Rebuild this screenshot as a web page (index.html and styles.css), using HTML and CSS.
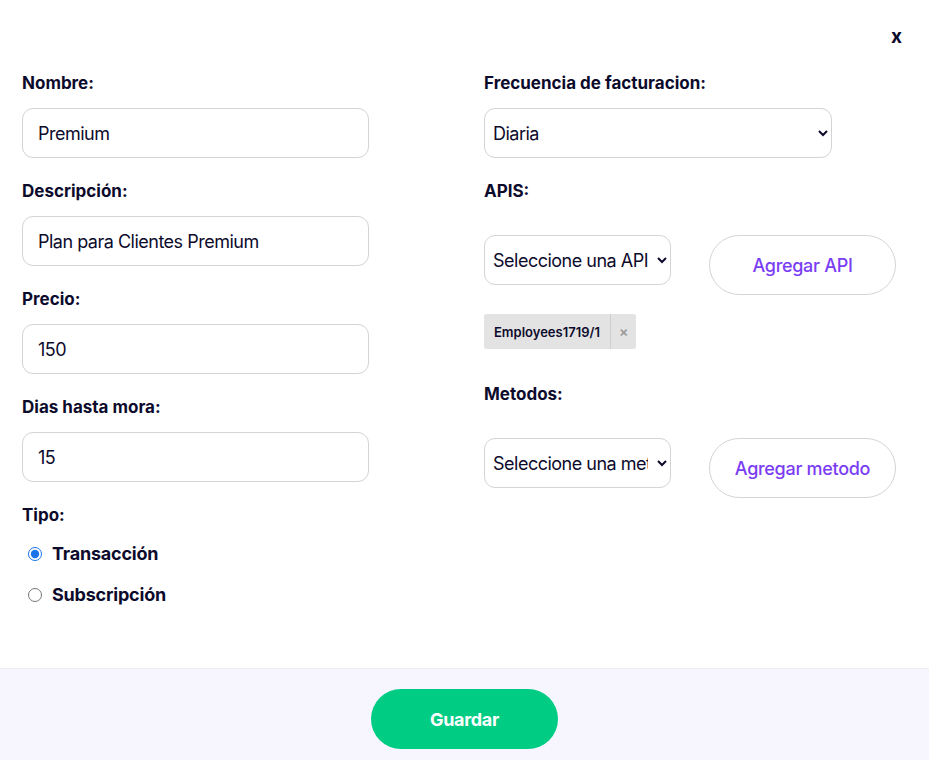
FILE: index.html
```html
<!DOCTYPE html>
<html lang="es">
<head>
    <meta charset="UTF-8">
    <title>Plan</title>
    <link rel="stylesheet" href="styles.css">
</head>
<body>

<div class="modal">
    <div class="modal-head">
        <span class="close">x</span>
    </div>

    <div class="modal-body">
        <!-- columna izquierda -->
        <div class="col">
            <div class="field">
                <label class="lbl">Nombre:</label>
                <input class="inp" type="text" value="Premium">
            </div>
            <div class="field">
                <label class="lbl">Descripción:</label>
                <input class="inp" type="text" value="Plan para Clientes Premium">
            </div>
            <div class="field">
                <label class="lbl">Precio:</label>
                <input class="inp" type="text" value="150">
            </div>
            <div class="field">
                <label class="lbl">Dias hasta mora:</label>
                <input class="inp" type="text" value="15">
            </div>
            <div class="field">
                <label class="lbl">Tipo:</label>
                <div class="radios">
                    <label class="radio"><input type="radio" name="tipo" checked> Transacción</label>
                    <label class="radio"><input type="radio" name="tipo"> Subscripción</label>
                </div>
            </div>
        </div>

        <!-- columna derecha -->
        <div class="col">
            <div class="field">
                <label class="lbl">Frecuencia de facturacion:</label>
                <select class="sel sel-wide">
                    <option>Diaria</option>
                </select>
            </div>
            <div class="field">
                <label class="lbl">APIS:</label>
                <div class="add-row">
                    <select class="sel sel-small">
                        <option>Seleccione una API</option>
                    </select>
                    <button class="btn-add">Agregar API</button>
                </div>
                <div class="chips">
                    <span class="chip">
                        <span class="chip-text">Employees1719/1</span>
                        <span class="chip-x">×</span>
                    </span>
                </div>
            </div>
            <div class="field">
                <label class="lbl">Metodos:</label>
                <div class="add-row">
                    <select class="sel sel-small">
                        <option>Seleccione una metodo</option>
                    </select>
                    <button class="btn-add">Agregar metodo</button>
                </div>
            </div>
        </div>
    </div>

    <div class="modal-foot">
        <button class="btn-save">Guardar</button>
    </div>
</div>

</body>
</html>
```

FILE: styles.css
```css
*{
    margin: 0;
    padding: 0;
    box-sizing: border-box;
}
body{
    font-family: Inter, "Liberation Sans", sans-serif;
    color: #0d0b2c;
    background: #fff;
}
.modal{
    width: 929px;
    height: 760px;
    display: flex;
    flex-direction: column;
}
.modal-head{
    display: flex;
    justify-content: flex-end;
    padding: 24px 27px 0 0;
    height: 73px;
}
.close{
    font-size: 19px;
    font-weight: 700;
    line-height: 26px;
    cursor: pointer;
}
.modal-body{
    flex: 1;
    display: grid;
    grid-template-columns: 462px 1fr;
    padding-left: 22px;
}
.field{
    margin-bottom: 23px;
}
.lbl{
    display: block;
    font-size: 17px;
    font-weight: 700;
    line-height: 20px;
    margin-bottom: 15px;
    letter-spacing: 0;
}
.inp{
    display: block;
    width: 347px;
    height: 50px;
    border: 1px solid #d4d4d4;
    border-radius: 11px;
    padding: 0 15px;
    font-family: inherit;
    font-size: 18px;
    color: #0d0b2c;
    letter-spacing: -0.5px;
    outline: none;
}
.radios{
    margin-top: -7px;
}
.radio{
    display: flex;
    align-items: center;
    font-size: 18px;
    font-weight: 700;
    height: 41px;
    padding-left: 6px;
    letter-spacing: -0.2px;
}
.radio input{
    width: 14px;
    height: 14px;
    margin-right: 10px;
    accent-color: #1a73e8;
}
.sel{
    display: block;
    height: 50px;
    border: 1px solid #d4d4d4;
    border-radius: 11px;
    background: #fff;
    padding: 0 6px 0 4px;
    font-family: inherit;
    font-size: 18px;
    color: #0d0b2c;
    letter-spacing: -0.5px;
    outline: none;
}
.sel-wide{
    width: 348px;
}
.sel-small{
    width: 187px;
}
.add-row{
    display: flex;
    align-items: flex-start;
    gap: 38px;
    margin-top: 34px;
}
.btn-add{
    width: 187px;
    height: 60px;
    border: 1px solid #d4d4d4;
    border-radius: 30px;
    background: #fff;
    color: #7a3df4;
    font-family: inherit;
    font-size: 18px;
    font-weight: 500;
    letter-spacing: -0.3px;
    cursor: pointer;
}
.chips{
    margin-top: 19px;
    margin-bottom: 35px;
}
.chip{
    display: inline-flex;
    height: 35px;
    background: #e3e3e3;
    border-radius: 2px;
    font-size: 13px;
    font-weight: 600;
    align-items: stretch;
}
.chip-text{
    display: flex;
    align-items: center;
    padding: 0 10px;
    border-right: 1px solid #cfcfcf;
}
.chip-x{
    display: flex;
    align-items: center;
    padding: 0 8px 0 8px;
    color: #9a9a9a;
    font-size: 14px;
}
.modal-foot{
    height: 92px;
    background: #f7f5fd;
    border-top: 1px solid #efecf8;
    display: flex;
    justify-content: center;
    align-items: flex-start;
    padding-top: 20px;
}
.btn-save{
    width: 187px;
    height: 60px;
    border: none;
    border-radius: 30px;
    background: #00cc84;
    color: #fff;
    font-family: inherit;
    font-size: 18px;
    font-weight: 700;
    letter-spacing: -0.3px;
    cursor: pointer;
}
```
